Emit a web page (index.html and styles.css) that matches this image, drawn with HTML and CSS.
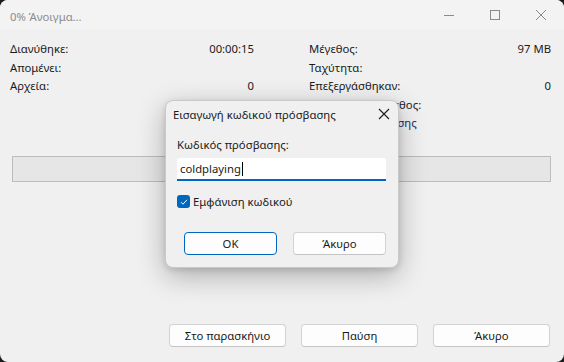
FILE: index.html
```html
<!DOCTYPE html>
<html lang="el">
<head>
<meta charset="utf-8">
<title>0% Άνοιγμα...</title>
<link rel="stylesheet" href="styles.css">
</head>
<body>
<div class="window">
  <div class="titlebar">
    <div class="title">0% Άνοιγμα...</div>
    <div class="controls">
      <span class="ctl"><svg width="12" height="12" viewBox="0 0 12 12"><path d="M1 6.5h10" stroke="#8a8a8a" stroke-width="1"/></svg></span>
      <span class="ctl"><svg width="12" height="12" viewBox="0 0 12 12"><rect x="1.5" y="1.5" width="9" height="9" fill="none" stroke="#8a8a8a" stroke-width="1"/></svg></span>
      <span class="ctl"><svg width="12" height="12" viewBox="0 0 12 12"><path d="M1 1L11 11M11 1L1 11" stroke="#8a8a8a" stroke-width="1"/></svg></span>
    </div>
  </div>
  <div class="stats">
    <div class="col">
      <div class="row"><span>Διανύθηκε:</span><span>00:00:15</span></div>
      <div class="row"><span>Απομένει:</span><span></span></div>
      <div class="row"><span>Αρχεία:</span><span>0</span></div>
    </div>
    <div class="col">
      <div class="row"><span>Μέγεθος:</span><span>97 MB</span></div>
      <div class="row"><span>Ταχύτητα:</span><span></span></div>
      <div class="row"><span>Επεξεργάσθηκαν:</span><span>0</span></div>
      <div class="row"><span>Πραγματικό μέγεθος:</span><span></span></div>
      <div class="row"><span class="link">Αναλογία συμπίεσης</span><span></span></div>
    </div>
  </div>
  <div class="progress"></div>
  <div class="actions">
    <button class="btn">Στο παρασκήνιο</button>
    <button class="btn">Παύση</button>
    <button class="btn">Άκυρο</button>
  </div>

  <div class="dialog">
    <div class="dlg-title">
      <span>Εισαγωγή κωδικού πρόσβασης</span>
      <svg class="dlg-close" width="12" height="12" viewBox="0 0 12 12"><path d="M1 1L11 11M11 1L1 11" stroke="#1a1a1a" stroke-width="1.1"/></svg>
    </div>
    <div class="dlg-body">
      <div class="label">Κωδικός πρόσβασης:</div>
      <div class="input"><span>coldplaying</span><span class="caret"></span></div>
      <div class="check">
        <span class="box"><svg width="10" height="10" viewBox="0 0 10 10"><path d="M2 5.2L4 7.2L8 2.8" fill="none" stroke="#fff" stroke-width="1"/></svg></span>
        <span>Εμφάνιση κωδικού</span>
      </div>
      <div class="dlg-actions">
        <button class="btn primary">OK</button>
        <button class="btn">Άκυρο</button>
      </div>
    </div>
  </div>
</div>
</body>
</html>
```
FILE: styles.css
```css
html, body {
  margin: 0;
  padding: 0;
  background: #1b1b1b;
}
body {
  width: 564px;
  height: 362px;
  overflow: hidden;
  font-family: "Noto Sans", "Open Sans", sans-serif;
  font-size: 11.3px;
  color: #1a1a1a;
}
.window {
  position: relative;
  width: 564px;
  height: 362px;
  background: #f0f0f0;
  border-radius: 8px;
  display: flex;
  flex-direction: column;
  overflow: hidden;
}
.titlebar {
  height: 30px;
  display: flex;
  align-items: center;
  justify-content: space-between;
  padding-left: 10px;
  background: #f3f3f3;
}
.title {
  color: #8c8c8c;
  margin-top: 2px;
}
.controls {
  display: flex;
  height: 30px;
}
.ctl {
  width: 46px;
  display: flex;
  align-items: center;
  justify-content: center;
}
.stats {
  display: grid;
  grid-template-columns: 244px 242px;
  column-gap: 55px;
  padding: 10px 13px 0 10px;
}
.row {
  display: flex;
  justify-content: space-between;
  height: 18.5px;
  line-height: 18.5px;
  white-space: nowrap;
}
.link { color: #1a2a6a; }
.progress {
  margin: 23px 13px 0 12px;
  height: 24px;
  background: #e6e6e6;
  border: 1px solid #bcbcbc;
}
.actions {
  margin-top: auto;
  display: flex;
  justify-content: flex-end;
  gap: 15px;
  padding: 0 14px 15px 0;
}
.btn {
  width: 117px;
  height: 23px;
  background: #fdfdfd;
  border: 1px solid #d2d2d2;
  border-bottom-color: #c4c4c4;
  border-radius: 4px;
  font-family: "Noto Sans", "Open Sans", sans-serif;
  font-size: 11.3px;
  color: #1a1a1a;
  padding: 0;
}
.dialog {
  position: absolute;
  left: 165px;
  top: 100px;
  width: 234px;
  height: 168px;
  box-sizing: border-box;
  background: #f0f0f0;
  border: 1px solid #c9c9c9;
  border-radius: 8px;
  box-shadow: 0 8px 28px rgba(0,0,0,0.28), 0 2px 6px rgba(0,0,0,0.12);
}
.dlg-title {
  height: 26px;
  display: flex;
  align-items: center;
  justify-content: space-between;
  padding: 0 8px 0 7px;
}
.dlg-body {
  padding: 9px 12px 0 11px;
}
.label {
  line-height: 18px;
}
.input {
  margin-top: 4px;
  height: 23px;
  box-sizing: border-box;
  background: #fff;
  border-bottom: 2px solid #0067c0;
  border-radius: 3px 3px 0 0;
  display: flex;
  align-items: center;
  padding-left: 3px;
}
.caret {
  width: 1px;
  height: 14px;
  background: #000;
  margin-left: 1px;
}
.check {
  margin-top: 13px;
  display: flex;
  align-items: center;
  gap: 3px;
}
.box {
  width: 13px;
  height: 13px;
  border-radius: 3px;
  background: #0067c0;
  display: flex;
  align-items: center;
  justify-content: center;
}
.dlg-actions {
  margin-top: 23px;
  display: flex;
  gap: 16px;
  padding-left: 7px;
}
.dlg-actions .btn {
  width: 93px;
  height: 23px;
}
.btn.primary {
  border: 1px solid #0067c0;
}
```
